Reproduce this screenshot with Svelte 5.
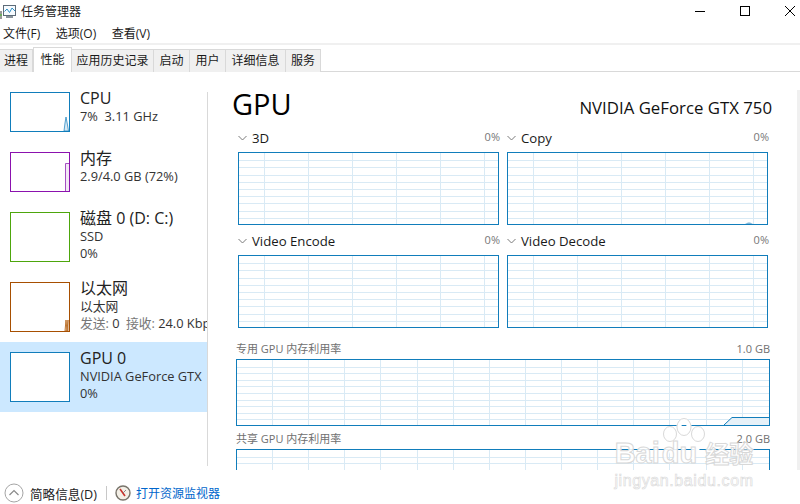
<script lang="ts">
  const tabs = [
    { label: "进程", w: 32 },
    { label: "性能", w: 37, active: true },
    { label: "应用历史记录", w: 81 },
    { label: "启动", w: 35 },
    { label: "用户", w: 35 },
    { label: "详细信息", w: 59 },
    { label: "服务", w: 34 }
  ];

  const resources = [
    { name: "CPU", lines: ["7%  3.11 GHz"], color: "#117dbb", h: 40, kind: "cpu" },
    { name: "内存", lines: ["2.9/4.0 GB (72%)"], color: "#8b12ae", h: 40, kind: "mem" },
    { name: "磁盘 0 (D: C:)", lines: ["SSD", "0%"], color: "#4da60c", h: 50, kind: "" },
    { name: "以太网", lines: ["以太网"], color: "#a74f01", h: 50, kind: "net" },
    { name: "GPU 0", lines: ["NVIDIA GeForce GTX", "0%"], color: "#117dbb", h: 50, kind: "", selected: true }
  ];

  const engines = [
    [{ name: "3D" }, { name: "Copy", blip: true }],
    [{ name: "Video Encode" }, { name: "Video Decode" }]
  ];

  const range = (n: number) => Array.from({ length: n }, (_, i) => i);
</script>

{#snippet grid(w: number, h: number, first: number, stepX: number, stepY: number)}
  <svg class="grid" width={w} height={h} viewBox="0 0 {w} {h}" shape-rendering="crispEdges">
    {#each range(12) as i}
      <line x1="0" x2={w} y1={Math.round(stepY * (i + 1)) + 0.5} y2={Math.round(stepY * (i + 1)) + 0.5} />
    {/each}
    {#each range(16) as i}
      <line y1="0" y2={h} x1={Math.round(first + stepX * i) + 0.5} x2={Math.round(first + stepX * i) + 0.5} />
    {/each}
  </svg>
{/snippet}

<div class="window">
  <header class="titlebar">
    <svg class="appicon" width="16" height="16" viewBox="0 0 16 16">
      <rect x="-3" y="7" width="5" height="8" fill="#9a9a9a" />
      <rect x="0" y="10" width="2" height="2" fill="#6cab5c" />
      <rect x="3.500" y="1.500" width="12" height="10" fill="#f6fbff" stroke="#5d6b78" />
      <path d="M4.500 7.500 7 5l2.500 3.500L12 4l3 3" fill="none" stroke="#2f8fc4" />
      <rect x="6" y="12" width="7" height="2" fill="#8b949c" />
    </svg>
    <span class="apptitle">任务管理器</span>
    <div class="controls">
      <svg width="10" height="10" viewBox="0 0 10 10"><path d="M0 5.500h10" stroke="#000" fill="none" /></svg>
      <svg width="10" height="10" viewBox="0 0 10 10"><rect x="0.500" y="0.500" width="9" height="9" stroke="#000" fill="none" /></svg>
      <svg width="10" height="10" viewBox="0 0 10 10"><path d="M0 0l10 10M10 0 0 10" stroke="#000" fill="none" /></svg>
    </div>
  </header>

  <nav class="menu">
    <span>文件(F)</span>
    <span>选项(O)</span>
    <span>查看(V)</span>
  </nav>

  <div class="tabs">
    {#each tabs as tab}
      <div class="tab" class:active={tab.active} style="width: {tab.w}px">{tab.label}</div>
    {/each}
  </div>

  <div class="body">
    <aside class="sidebar">
      {#each resources as r}
        <div class="resource" class:selected={r.selected}>
          <div class="thumb" style="border-color: {r.color}; height: {r.h}px">
            {#if r.kind === "cpu"}
              <svg class="spark" width="58" height="38" viewBox="0 0 58 38">
                <path d="M53 38 54 30 55 24 56.500 32 57.500 38z" fill="#d8e9f4" stroke="#117dbb" stroke-width="0.7" />
              </svg>
            {:else if r.kind === "mem"}
              <svg class="spark" width="58" height="38" viewBox="0 0 58 38">
                <path d="M54 38V10h4v28z" fill="#f2e8f5" />
                <path d="M54.500 38V10.500H58" fill="none" stroke="#a64fc2" />
              </svg>
            {:else if r.kind === "net"}
              <svg class="spark" width="58" height="48" viewBox="0 0 58 48">
                <path d="M54 48 55 37 56 48 57 37V48z" fill="#f3e4d6" stroke="#b8691f" stroke-width="0.9" />
              </svg>
            {/if}
          </div>
          <div class="info">
            <div class="name">{r.name}</div>
            {#each r.lines as line}
              <div class="sub">{line}</div>
            {/each}
            {#if r.kind === "net"}
              <div class="sub"><span class="dim">发送:</span> 0 <span class="dim recv">接收:</span> 24.0 Kbps</div>
            {/if}
          </div>
        </div>
      {/each}
    </aside>

    <main class="detail">
      <div class="heading">
        <h1>GPU</h1>
        <div class="model">NVIDIA GeForce GTX 750</div>
      </div>

      {#each engines as row}
        <div class="engines">
          {#each row as e}
            <section class="engine">
              <div class="engine-head">
                <svg width="9" height="6" viewBox="0 0 9 6"><path d="M.5 1 4.500 5l4-4" fill="none" stroke="#7a7a7a" /></svg>
                <span class="engine-name">{e.name}</span>
                <span class="pct">0%</span>
              </div>
              <div class="chart small">
                {@render grid(259, 71, 25, 44, 7.2)}
                {#if e.blip}
                  <svg class="blip" width="8" height="2" viewBox="0 0 8 2"><path d="M0 2 3 .5h2L8 2z" fill="#7fb8da" /></svg>
                {/if}
              </div>
            </section>
          {/each}
        </div>
      {/each}

      <div class="wide-label first"><span>专用 GPU 内存利用率</span><span>1.0 GB</span></div>
      <div class="chart wide">
        {@render grid(532, 65, 35, 36.13, 6.6)}
        <svg class="usage" width="45" height="9" viewBox="0 0 45 9">
          <path d="M0 9 8 1.500H45V9z" fill="#e6f1f8" />
          <path d="M0 9 8 1.500H45" fill="none" stroke="#117dbb" />
        </svg>
      </div>
      <div class="wide-label"><span>共享 GPU 内存利用率</span><span>2.0 GB</span></div>
      <div class="chart wide cut">
        {@render grid(532, 65, 35, 36.13, 6.6)}
      </div>
    </main>

    <div class="scrollbar"></div>
  </div>

  <footer class="footer">
    <svg width="20" height="20" viewBox="0 0 20 20">
      <circle cx="10" cy="10" r="9" fill="none" stroke="#a5a5a5" />
      <path d="M5.500 12 10 7.500l4.500 4.500" fill="none" stroke="#8a8a8a" stroke-width="1.200" />
    </svg>
    <span class="fewer">简略信息(D)</span>
    <span class="sep"></span>
    <svg width="16" height="16" viewBox="0 0 16 16">
      <circle cx="8" cy="8" r="7" fill="#f3efe6" stroke="#77736a" stroke-width="1.400" />
      <path d="M5 4l5 7" stroke="#c8322c" stroke-width="1.600" fill="none" />
      <path d="M11 5 8 8" stroke="#8a8a8a" fill="none" />
    </svg>
    <span class="monitor">打开资源监视器</span>
  </footer>

  <div class="watermark" aria-hidden="true">
    <svg class="paw" width="46" height="42" viewBox="0 0 46 42">
      <g fill="none" stroke="#fff" stroke-width="5">
        <ellipse cx="23" cy="9" rx="5" ry="6.500" />
        <ellipse cx="9" cy="16" rx="4.500" ry="5.500" />
        <ellipse cx="37" cy="16" rx="4.500" ry="5.500" />
        <ellipse cx="23" cy="31" rx="13" ry="9" />
      </g>
      <g fill="none" stroke="#d9d9d9" stroke-width="1">
        <ellipse cx="23" cy="9" rx="7" ry="8.500" />
        <ellipse cx="9" cy="16" rx="6.500" ry="7.500" />
        <ellipse cx="37" cy="16" rx="6.500" ry="7.500" />
      </g>
    </svg>
    <div class="mark-main">Bai<span class="du">du</span> <span class="jy">经验</span></div>
    <div class="mark-url">jingyan.baidu.com</div>
  </div>
</div>

<style>
  :global(body) {
    margin: 0;
    background: #fff;
  }
  .window {
    position: relative;
    width: 800px;
    height: 504px;
    overflow: hidden;
    background: #fff;
    display: flex;
    flex-direction: column;
    color: #1a1a1a;
    font-family: "Open Sans", "Noto Sans CJK SC", sans-serif;
    font-size: 12px;
  }
  .titlebar {
    height: 22px;
    display: flex;
    align-items: center;
    flex: none;
  }
  .appicon {
    margin-top: 1px;
  }
  .apptitle {
    margin-left: 5px;
    font-size: 12px;
    color: #222;
  }
  .controls {
    margin-left: auto;
    display: flex;
    gap: 35px;
    padding-right: 5px;
  }
  .controls svg {
    display: block;
  }
  .menu {
    height: 21px;
    display: flex;
    align-items: center;
    gap: 15.500px;
    padding-left: 3px;
    flex: none;
    border-bottom: 2px solid #f0f0f0;
  }
  .tabs {
    height: 26px;
    margin-top: 1px;
    display: flex;
    flex: none;
    align-items: flex-end;
    border-bottom: 1px solid #d9d9d9;
    box-sizing: border-box;
  }
  .tab {
    height: 22px;
    line-height: 22px;
    text-align: center;
    background: #f0f0f0;
    border: 1px solid #d9d9d9;
    border-bottom: none;
    border-left: none;
    white-space: nowrap;
    position: relative;
    top: 1px;
  }
  .tab.active {
    height: 24px;
    line-height: 23px;
    background: #fff;
    border-left: 1px solid #d9d9d9;
    z-index: 1;
  }
  .body {
    flex: 1;
    display: flex;
    min-height: 0;
    position: relative;
  }
  .sidebar {
    width: 207px;
    flex: none;
    margin-top: 10px;
    height: 384px;
    border-right: 1px solid #d9d9d9;
    overflow: hidden;
    clip-path: inset(10px 0 0 0);
  }
  .resource {
    display: flex;
    padding: 10px 0 10px 10px;
    gap: 10px;
    white-space: nowrap;
    overflow: hidden;
  }
  .resource.selected {
    background: #cce8ff;
  }
  .thumb {
    position: relative;
    width: 60px;
    box-sizing: border-box;
    border: 1px solid;
    background: #fff;
    flex: none;
  }
  .spark {
    display: block;
    position: absolute;
    left: 0;
    bottom: 0;
  }
  .info {
    margin-top: -3px;
    line-height: 17px;
  }
  .name {
    font-size: 16px;
    line-height: 19px;
    color: #222;
  }
  .sub {
    font-size: 12.800px;
    color: #333;
    white-space: pre;
  }
  .dim {
    color: #777;
  }
  .recv {
    margin-left: 3px;
  }
  .detail {
    flex: 1;
    padding: 0 27px 0 25px;
    min-width: 0;
    overflow: hidden;
  }
  .heading {
    display: flex;
    justify-content: space-between;
    align-items: flex-end;
    height: 57px;
    margin: 0 1px 0 -1px;
  }
  h1 {
    margin: 0;
    font-size: 29px;
    font-weight: 400;
    line-height: 40px;
    color: #000;
    position: relative;
    top: -5px;
  }
  .model {
    font-size: 16.800px;
    line-height: 22px;
    color: #111;
    padding-bottom: 10px;
  }
  .engines {
    display: flex;
    gap: 8px;
    padding: 0 2px 0 5px;
    margin-bottom: 7px;
  }
  .engine {
    width: 261px;
  }
  .engine-head {
    height: 18px;
    padding-bottom: 5px;
    display: flex;
    align-items: center;
    gap: 5px;
  }
  .engine-name {
    font-size: 13.200px;
  }
  .pct {
    margin-left: auto;
    margin-right: -1px;
    font-size: 11px;
    color: #777;
    align-self: flex-start;
  }
  .chart {
    position: relative;
    border: 1px solid #117dbb;
    background: #fff;
    overflow: hidden;
  }
  .chart.small {
    width: 259px;
    height: 71px;
  }
  .chart.wide {
    width: 532px;
    height: 65px;
    margin-left: 3px;
  }
  .chart.cut {
    border-bottom: none;
    height: 21px;
  }
  .grid {
    display: block;
  }
  .grid line {
    stroke: #d9eaf5;
    stroke-width: 1;
  }
  .blip {
    position: absolute;
    right: 14px;
    bottom: 0;
  }
  .usage {
    position: absolute;
    right: 0;
    bottom: 0;
  }
  .wide-label {
    display: flex;
    justify-content: space-between;
    margin-left: 3px;
    width: 534px;
    height: 23px;
    line-height: 25px;
    font-size: 11px;
    color: #707070;
  }
  .wide-label.first {
    height: 24px;
    line-height: 28px;
    margin-top: 7px;
  }
  .scrollbar {
    position: absolute;
    right: 0;
    top: 18px;
    bottom: 0;
    width: 3px;
    background: #f0f0f0;
  }
  .footer {
    height: 34px;
    flex: none;
    display: flex;
    align-items: center;
    padding: 12px 0 0 4px;
    box-sizing: border-box;
  }
  .fewer {
    margin-left: 6px;
    font-size: 12.600px;
    color: #222;
  }
  .sep {
    width: 1px;
    height: 14px;
    background: #c8c8c8;
    margin: 0 8px 0 9px;
  }
  .monitor {
    margin-left: 5px;
    color: #0066cc;
  }
  .watermark {
    position: absolute;
    left: 609px;
    top: 418px;
    width: 150px;
    text-align: center;
    color: #fff;
    pointer-events: none;
    font-family: "Liberation Sans", sans-serif;
  }
  .paw {
    display: block;
    position: absolute;
    left: 52px;
    top: 0;
  }
  .mark-main {
    margin-top: 12px;
    padding-top: 9px;
    font-size: 29px;
    line-height: 28px;
    font-weight: 700;
    color: rgba(255, 255, 255, 0.9);
    -webkit-text-stroke: 1px #d8d8d8;
    white-space: nowrap;
    position: relative;
  }
  .du {
    margin-left: 2px;
  }
  .jy {
    font-family: "Noto Sans CJK SC", sans-serif;
    font-size: 24px;
  }
  .mark-url {
    margin-top: 5px;
    font-size: 16px;
    line-height: 18px;
    letter-spacing: 0.600px;
    color: rgba(255, 255, 255, 0.9);
    -webkit-text-stroke: 0.6px #d8d8d8;
    white-space: nowrap;
    position: relative;
  }
</style>
